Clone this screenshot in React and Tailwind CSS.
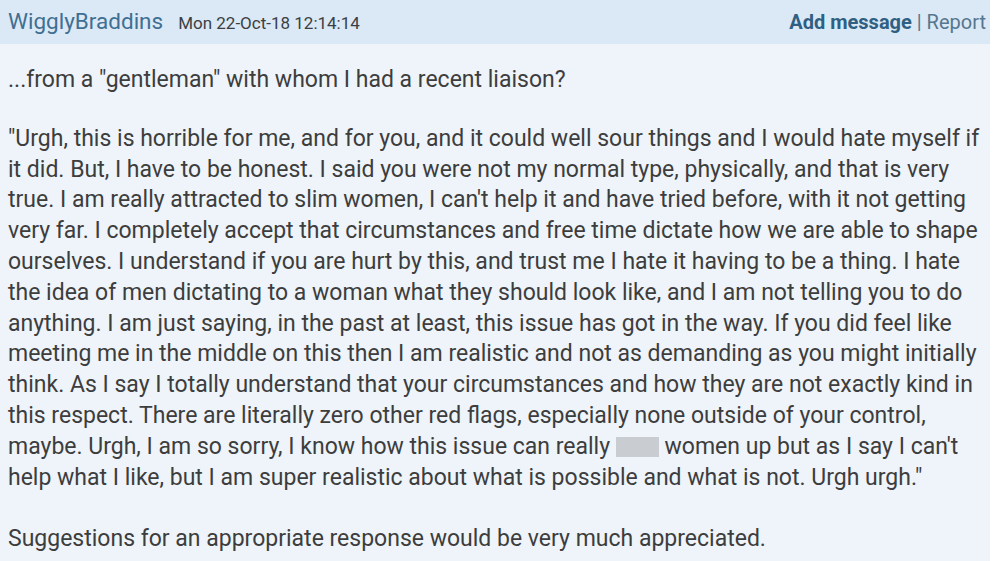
export default function App() {
  const lines = [
    '"Urgh, this is horrible for me, and for you, and it could well sour things and I would hate myself if',
    'it did. But, I have to be honest. I said you were not my normal type, physically, and that is very',
    "true. I am really attracted to slim women, I can't help it and have tried before, with it not getting",
    'very far. I completely accept that circumstances and free time dictate how we are able to shape',
    'ourselves. I understand if you are hurt by this, and trust me I hate it having to be a thing. I hate',
    'the idea of men dictating to a woman what they should look like, and I am not telling you to do',
    'anything. I am just saying, in the past at least, this issue has got in the way. If you did feel like',
    'meeting me in the middle on this then I am realistic and not as demanding as you might initially',
    'think. As I say I totally understand that your circumstances and how they are not exactly kind in',
    'this respect. There are literally zero other red flags, especially none outside of your control,',
  ];

  return (
    <div className="flex h-[561px] w-[1000px] overflow-hidden bg-white" style={{ fontFamily: 'Roboto, "Liberation Sans", sans-serif' }}>
      <div className="flex w-[990px] flex-col bg-[#eef4fa]">
        {/* header */}
        <div className="flex h-[44px] shrink-0 items-center justify-between bg-[#dbe8f5] pl-[8px] pr-[4px]">
          <div className="flex items-baseline gap-[15px]">
            <span className="text-[22.5px] text-[#3f6f92]">WigglyBraddins</span>
            <span className="text-[17px] text-[#3a3f44]">Mon 22-Oct-18 12:14:14</span>
          </div>
          <div className="text-[20px] text-[#55778f]">
            <span className="font-bold text-[#2f5f82]">Add message</span> | Report
          </div>
        </div>

        {/* body */}
        <div className="px-[8px] pt-[21px] text-[23px] leading-[30.8px] text-[#3d3d3d]">
          <p className="mb-[28px]">...from a "gentleman" with whom I had a recent liaison?</p>
          <p className="mb-[31px]">
            {lines.map((l) => (
              <span key={l} className="block whitespace-nowrap">{l}</span>
            ))}
            <span className="block whitespace-nowrap">
              maybe. Urgh, I am so sorry, I know how this issue can really{' '}
              <span className="inline-block h-[20px] w-[43px] translate-y-[3px] bg-[#c9cdd1]" />{' '}
              women up but as I say I can't
            </span>
            <span className="block whitespace-nowrap">
              help what I like, but I am super realistic about what is possible and what is not. Urgh urgh."
            </span>
          </p>
          <p>Suggestions for an appropriate response would be very much appreciated.</p>
        </div>
      </div>
    </div>
  );
}
